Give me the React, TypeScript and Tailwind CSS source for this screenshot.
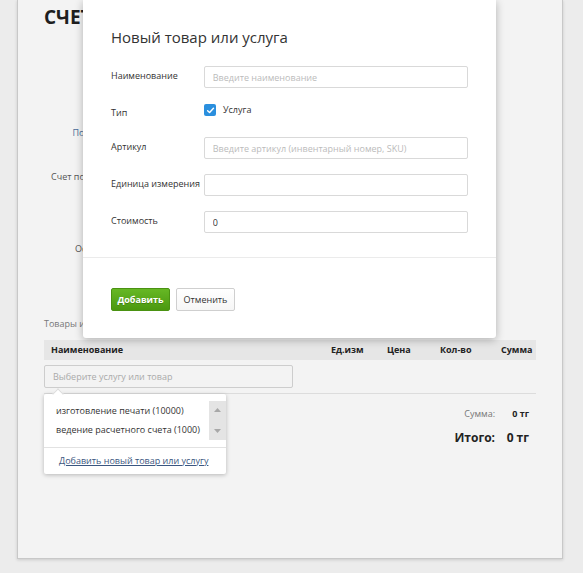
import { useState } from "react";

const font = { fontFamily: '"Open Sans", "Liberation Sans", sans-serif' };

function Field({ label, placeholder, value }: { label: string; placeholder?: string; value?: string }) {
  return (
    <div className="flex items-start h-[22px]">
      <div className="w-[93px] pt-[4px] text-[9px] leading-[12px] text-[#333]">{label}</div>
      <input
        className="block w-[265px] h-[22px] border border-[#d9d9d9] rounded-[2px] px-[8px] text-[9px] text-[#333] placeholder:text-[#bbb] outline-none bg-white"
        placeholder={placeholder}
        defaultValue={value}
      />
    </div>
  );
}

function Modal() {
  const [service, setService] = useState(true);
  return (
    <div className="absolute left-[83px] top-0 w-[413px] h-[338px] bg-white rounded-b-[3px] shadow-[0_2px_8px_rgba(0,0,0,0.28)]">
      <div className="px-[28px] pt-[26px]">
        <h2 className="text-[15px] leading-[22px] text-[#333] font-normal">Новый товар или услуга</h2>
        <div className="mt-[18px]">
          <Field label="Наименование" placeholder="Введите наименование" />
        </div>
        <div className="mt-[13px] flex items-start h-[22px]">
          <div className="w-[93px] pt-[6px] text-[9px] leading-[12px] text-[#333]">Тип</div>
          <label className="flex items-center gap-[7px] pt-[3px] cursor-pointer" onClick={() => setService(!service)}>
            <span className={`w-[12px] h-[12px] rounded-[2px] flex items-center justify-center ${service ? "bg-[#2a8fde]" : "bg-white border border-[#bbb]"}`}>
              {service && (
                <svg width="9" height="9" viewBox="0 0 10 10" fill="none">
                  <path d="M1.8 5.2 L4 7.3 L8.3 2.6" stroke="white" strokeWidth="1.6" strokeLinecap="round" strokeLinejoin="round" />
                </svg>
              )}
            </span>
            <span className="text-[9px] leading-[12px] text-[#333]">Услуга</span>
          </label>
        </div>
        <div className="mt-[14px]">
          <Field label="Артикул" placeholder="Введите артикул (инвентарный номер, SKU)" />
        </div>
        <div className="mt-[15px]">
          <Field label="Единица измерения" />
        </div>
        <div className="mt-[15px]">
          <Field label="Стоимость" value="0" />
        </div>
      </div>
      <div className="mt-[24px] border-t border-[#ebebeb]" />
      <div className="px-[28px] pt-[30px] flex gap-[6px]">
        <button className="w-[59px] h-[23px] rounded-[2px] border border-[#4a9212] bg-gradient-to-b from-[#66b824] to-[#4b980f] text-white text-[9px] font-bold [text-shadow:0_1px_0_rgba(0,0,0,0.2)]">
          Добавить
        </button>
        <button className="w-[59px] h-[23px] rounded-[2px] border border-[#cfcfcf] bg-gradient-to-b from-white to-[#f6f6f6] text-[#333] text-[9px]">
          Отменить
        </button>
      </div>
    </div>
  );
}

function Dropdown() {
  return (
    <div className="absolute left-0 top-[54px] w-[182px] h-[80px] bg-white rounded-[2px] shadow-[0_1px_4px_rgba(0,0,0,0.25)]">
      <div className="absolute -top-[4px] left-[10px] w-[8px] h-[8px] bg-white rotate-45 border-l border-t border-[#ddd]" />
      <div className="relative flex pt-[7px]">
        <div className="flex-1 pl-[12px]">
          <div className="h-[19px] leading-[19px] text-[9px] text-[#333]">изготовление печати (10000)</div>
          <div className="h-[20px] leading-[20px] text-[9px] text-[#333]">ведение расчетного счета (1000)</div>
        </div>
        <div className="w-[17px] h-[39px] bg-[#e4e4e4] flex flex-col items-center justify-between py-[7px]">
          <svg width="7" height="4" viewBox="0 0 7 4"><path d="M0 4 L3.5 0 L7 4 Z" fill="#a8a8a8" /></svg>
          <svg width="7" height="4" viewBox="0 0 7 4"><path d="M0 0 L3.5 4 L7 0 Z" fill="#a8a8a8" /></svg>
        </div>
      </div>
      <div className="mt-[7px] border-t border-[#e2e2e2] h-[26px] flex items-center pl-[15px]">
        <a className="text-[9px] text-[#3a5680] underline" href="#">Добавить новый товар или услугу</a>
      </div>
    </div>
  );
}

export default function App() {
  const rows = [
    { label: "Покупатель", top: "mt-[92px]", cls: "text-[#4a6d99]" },
    { label: "Счет покупателя", top: "mt-[22px]", cls: "text-[#555]" },
    { label: "Основание", top: "mt-[50px]", cls: "text-[#555]" },
  ];
  return (
    <div className="relative w-full h-[573px] bg-[#ececec] overflow-hidden" style={font}>
      <div className="ml-[17px] w-[546px] h-[559px] bg-[#f3f3f3] border-x border-b border-[#c8c8c8] shadow-[0_1px_3px_rgba(0,0,0,0.15)] px-[26px]">
        <h1 className="pt-[4px] text-[19px] leading-[26px] font-bold text-[#1e1e1e]">СЧЕТ НА ОПЛАТУ</h1>
        {rows.map((r) => (
          <div key={r.label} className={`${r.top} flex h-[22px] items-center`}>
            <div className={`w-[80px] text-right text-[9px] ${r.cls}`}>{r.label}</div>
            <div className="ml-[14px] w-[240px] h-[22px] border border-[#d5d5d5] bg-white rounded-[2px]" />
          </div>
        ))}
        <div className="mt-[58px] text-[9px] leading-[12px] text-[#777]">Товары и услуги</div>
        <div className="relative mt-[10px]">
          <div className="flex h-[20px] items-center bg-[#e6e6e6] text-[9px] font-bold text-[#222]">
            <div className="w-[287px] pl-[7px]">Наименование</div>
            <div className="w-[56px]">Ед.изм</div>
            <div className="w-[53px]">Цена</div>
            <div className="w-[61px]">Кол-во</div>
            <div className="flex-1">Сумма</div>
          </div>
          <div className="pt-[5px] pb-[5px] border-b border-[#dcdcdc]">
            <input
              className="block w-[249px] h-[23px] border border-[#cdcdcd] rounded-[2px] bg-[#f3f3f3] px-[8px] text-[9px] placeholder:text-[#aaa] outline-none"
              placeholder="Выберите услугу или товар"
            />
          </div>
          <Dropdown />
        </div>
        <div className="mt-[13px] flex justify-end pr-[7px]">
          <div className="grid grid-cols-[auto_34px] items-center gap-y-[8px]">
            <div className="text-right text-[9px] text-[#777]">Сумма:</div>
            <div className="text-right text-[9px] font-bold text-[#222]">0 тг</div>
            <div className="text-right text-[12px] font-bold text-[#222]">Итого:</div>
            <div className="text-right text-[12px] font-bold text-[#222]">0 тг</div>
          </div>
        </div>
      </div>
      <Modal />
    </div>
  );
}
